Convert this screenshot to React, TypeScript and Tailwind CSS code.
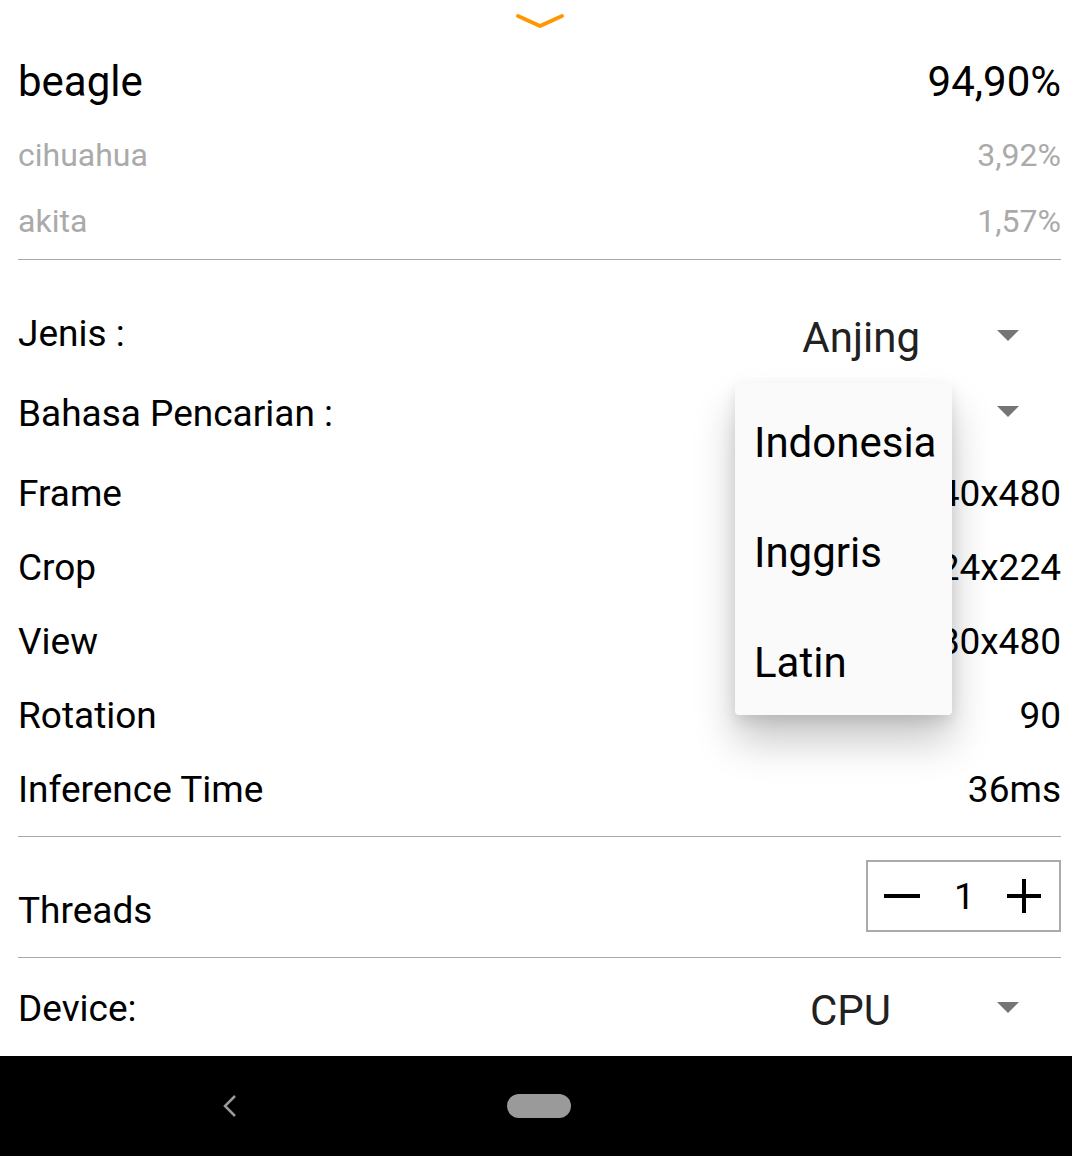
import React from "react";

function Tri() {
  return (
    <svg width="22" height="11" viewBox="0 0 22 11" className="block">
      <path d="M0 0 L22 0 L11 11 Z" fill="#757575" />
    </svg>
  );
}

function Row({ label, value }: { label: string; value: string }) {
  return (
    <div className="flex h-[74px] items-center justify-between">
      <span>{label}</span>
      <span>{value}</span>
    </div>
  );
}

export default function App() {
  return (
    <div
      className="relative h-[1156px] w-[1072px] overflow-hidden bg-white text-black"
      style={{ fontFamily: "Roboto, 'Noto Sans', sans-serif" }}
    >
      <div className="flex h-[48px] justify-center pl-[8px] pt-[13px]">
        <svg width="50" height="16" viewBox="0 0 50 16">
          <path d="M3 3 L25 13 L47 3" fill="none" stroke="#ff9800" strokeWidth="4" strokeLinecap="round" strokeLinejoin="round" />
        </svg>
      </div>
      <div className="px-[18px] pr-[11px] text-[37px] leading-none">
        <div className="flex h-[68px] items-center justify-between text-[42px]">
          <span>beagle</span>
          <span>94,90%</span>
        </div>
        <div className="flex h-[78px] items-center justify-between text-[32px] text-[#aaaaaa]">
          <span>cihuahua</span>
          <span>3,92%</span>
        </div>
        <div className="flex h-[54px] items-center justify-between text-[32px] text-[#aaaaaa]">
          <span>akita</span>
          <span>1,57%</span>
        </div>
        <div className="mt-[11px] h-px bg-[#aaaaaa]" />
        <div className="h-[38px]" />
        <div className="flex h-[74px] items-center justify-between">
          <span className="pb-[4px]">Jenis :</span>
          <div className="flex items-center">
            <span className="pt-[6px] text-[42px] text-[#212121]">Anjing</span>
            <span className="w-[77px]" />
            <Tri />
            <span className="w-[42px]" />
          </div>
        </div>
        <div className="flex h-[74px] items-center justify-between">
          <span className="pt-[8px]">Bahasa Pencarian :</span>
          <div className="flex items-center pt-[4px]">
            <Tri />
            <span className="w-[42px]" />
          </div>
        </div>
        <div className="h-[10px]" />
        <Row label="Frame" value="640x480" />
        <Row label="Crop" value="224x224" />
        <Row label="View" value="480x480" />
        <Row label="Rotation" value="90" />
        <Row label="Inference Time" value="36ms" />
        <div className="mt-[10px] h-px bg-[#aaaaaa]" />
        <div className="flex h-[120px] items-start justify-between">
          <span className="mt-[55px]">Threads</span>
          <div className="mt-[23px] flex h-[72px] w-[195px] items-center border-2 border-[#aaaaaa]">
            <svg width="36" height="4" viewBox="0 0 36 4" className="ml-[16px]">
              <rect width="36" height="4" fill="#000" />
            </svg>
            <span className="ml-[34px] w-[20px] text-center">1</span>
            <svg width="34" height="34" viewBox="0 0 34 34" className="ml-[33px]">
              <rect x="0" y="15" width="34" height="4" fill="#000" />
              <rect x="15" y="0" width="4" height="34" fill="#000" />
            </svg>
          </div>
        </div>
        <div className="h-px bg-[#aaaaaa]" />
        <div className="flex h-[98px] items-center justify-between">
          <span className="pt-[2px]">Device:</span>
          <div className="flex items-center">
            <span className="pt-[8px] text-[42px] text-[#212121]">CPU</span>
            <span className="w-[106px]" />
            <Tri />
            <span className="w-[42px]" />
          </div>
        </div>
      </div>
      <div className="flex h-[100px] items-center bg-black">
        <svg width="16" height="24" viewBox="0 0 16 24" className="ml-[222px]">
          <path d="M13 2 L3 12 L13 22" fill="none" stroke="#9a9a9a" strokeWidth="2.5" />
        </svg>
        <div className="ml-[269px] h-[24px] w-[64px] rounded-full bg-[#9a9a9a]" />
      </div>

      <div className="absolute left-[735px] top-[383px] h-[332px] w-[217px] rounded-[4px] bg-[#fafafa] pt-[5px] text-[42px] leading-none text-black shadow-[0_26px_40px_rgba(0,0,0,0.22),0_6px_14px_rgba(0,0,0,0.1)]">
        <div className="flex h-[110px] items-center pl-[19px]">Indonesia</div>
        <div className="flex h-[110px] items-center pl-[19px]">Inggris</div>
        <div className="flex h-[110px] items-center pl-[19px]">Latin</div>
      </div>
    </div>
  );
}
